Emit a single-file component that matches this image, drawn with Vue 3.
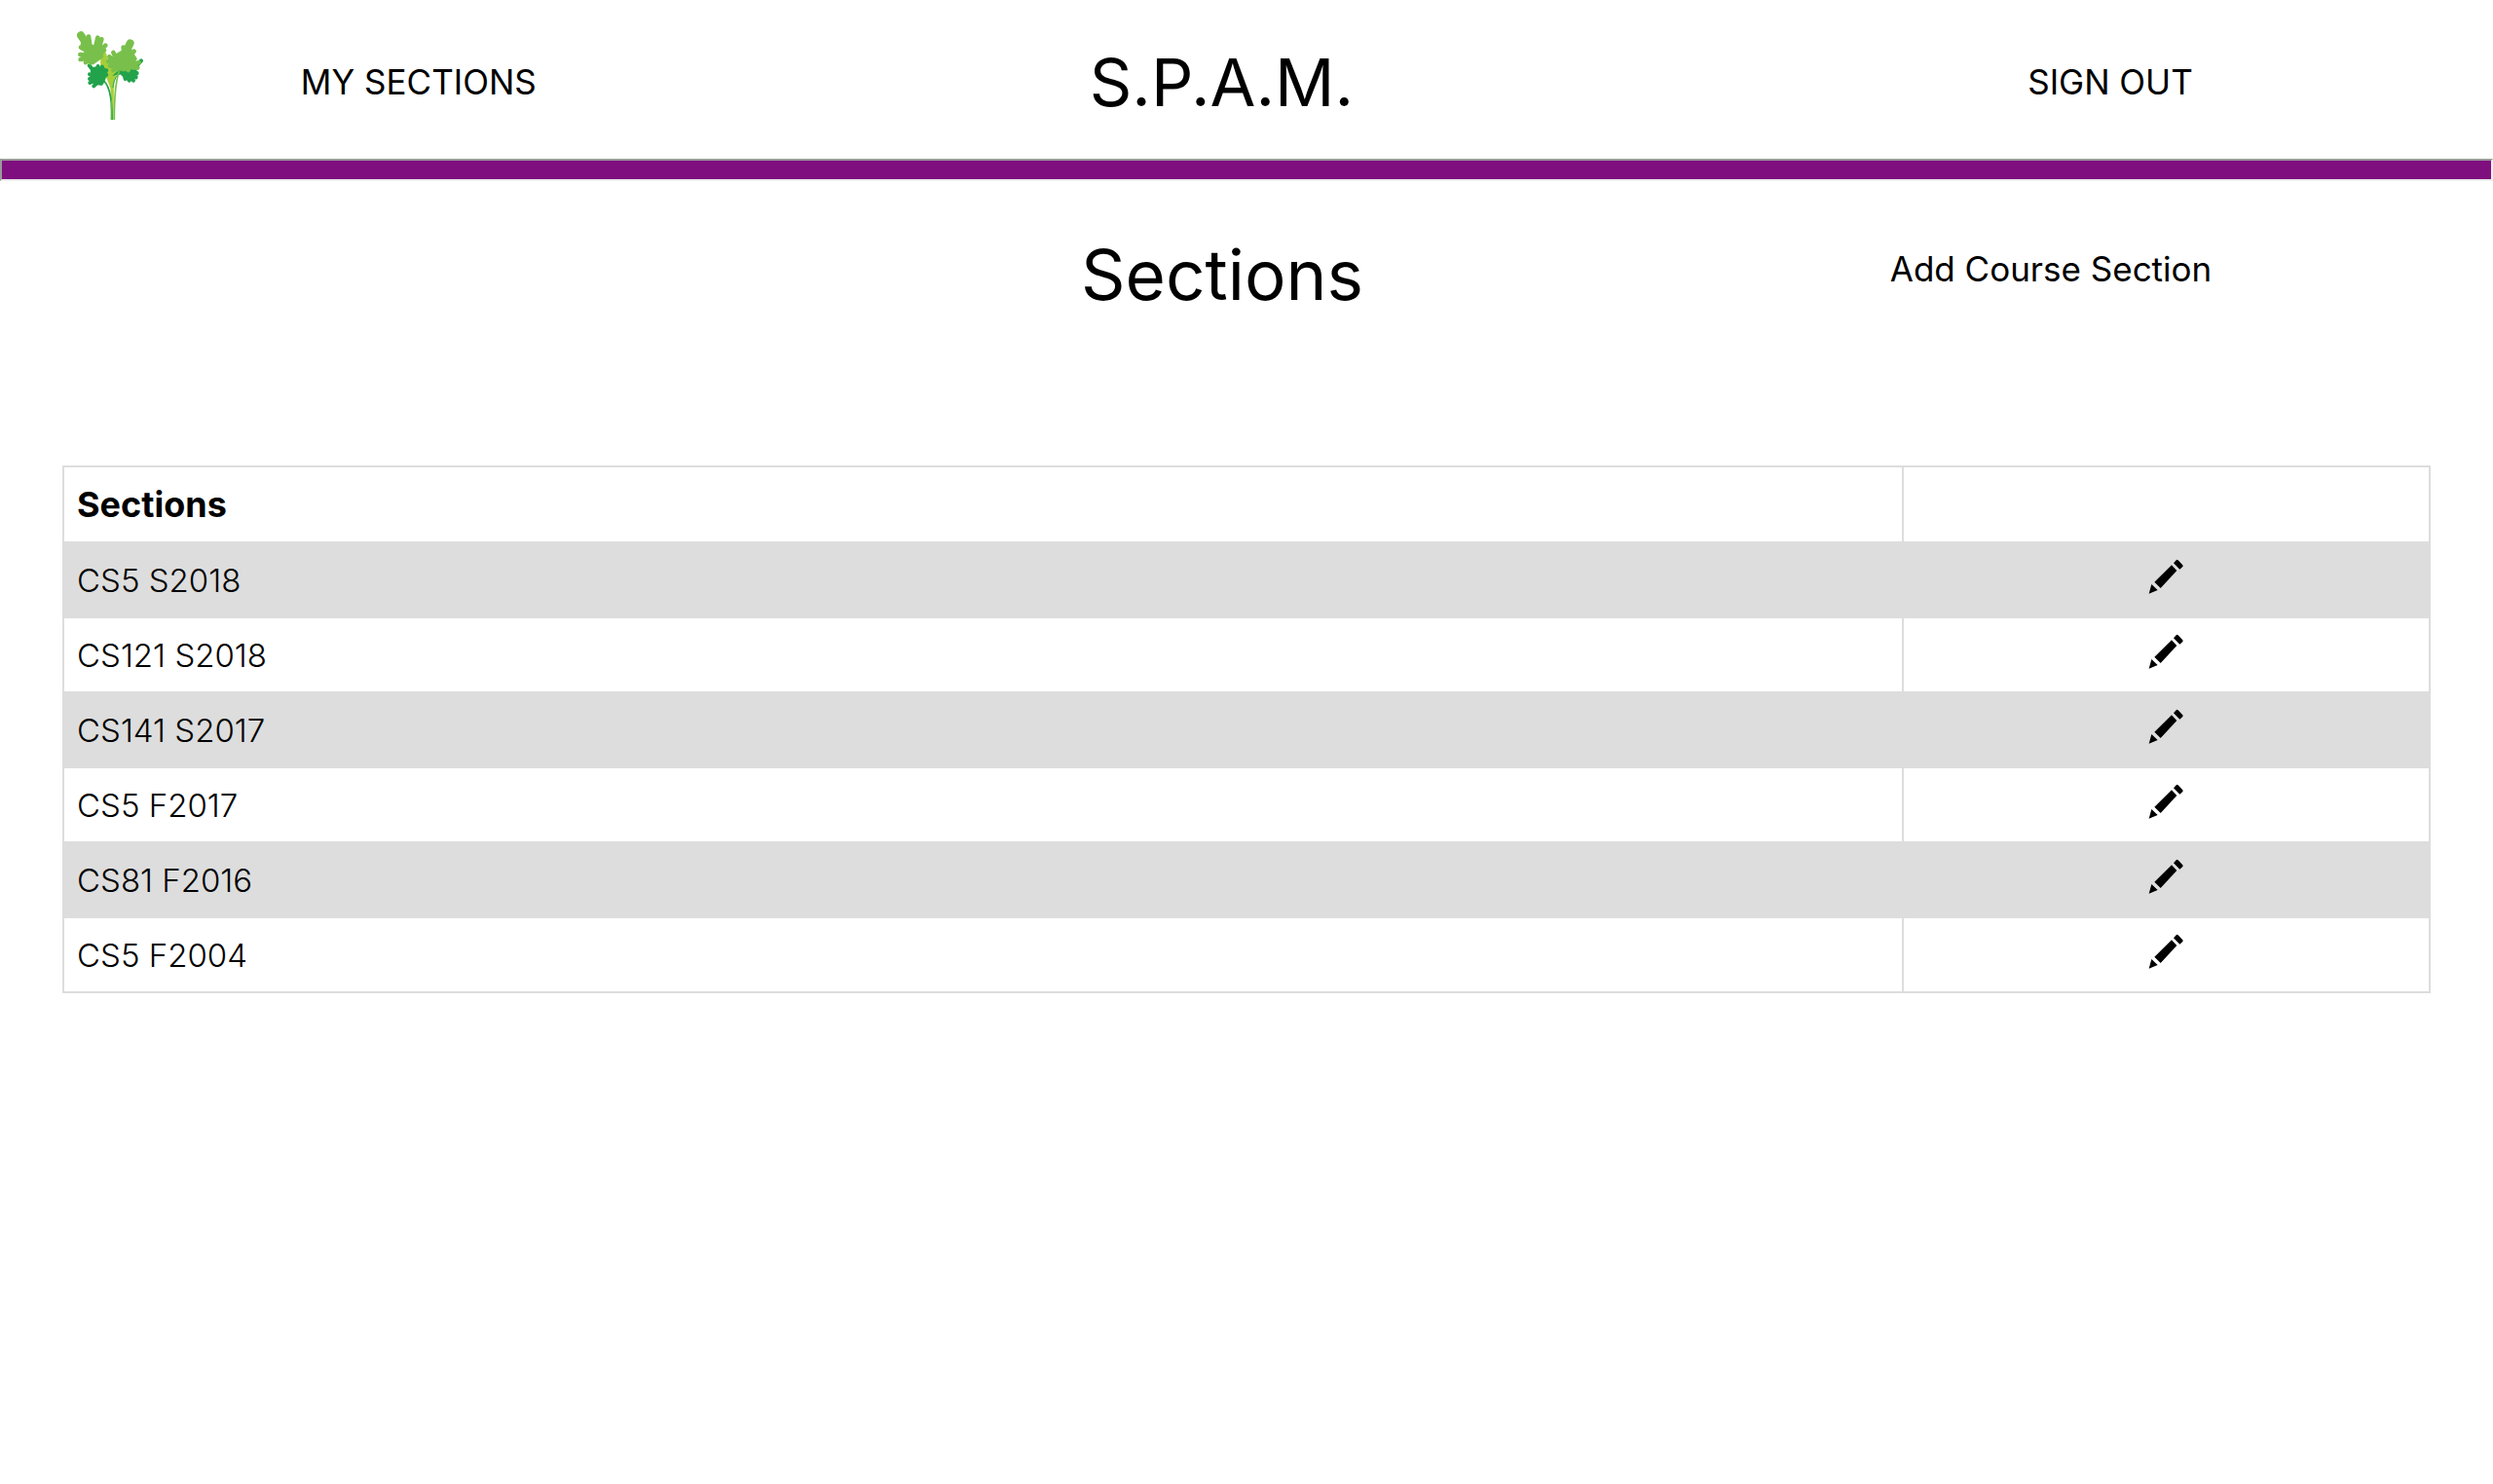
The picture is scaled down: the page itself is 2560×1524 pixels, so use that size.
<script setup>
const sections = [
  'CS5 S2018',
  'CS121 S2018',
  'CS141 S2017',
  'CS5 F2017',
  'CS81 F2016',
  'CS5 F2004',
]
</script>

<template>
  <header>
    <nav class="bar">
      <a class="logo" href="#" aria-label="Home">
        <svg viewBox="58 37 210 276" aria-hidden="true">
          <g class="lime">
            <path d="M143 99C129 104 129 135 134 160L151 184L162 214L165 310H170L172 190L181 171L187 140L158 151C151 137 154 108 143 99Z" />
            <path class="limb" d="M141 145 159 194M160 151 164 210M154 125 162 133" />
          </g>
          <g class="dark">
            <path d="M100 150 120 146 146 151 151 168 143 192 136 204 118 202 101 186Z" />
            <path class="lobe" d="M96 143 113 164M123 145 124 168M136 147 129 170M149 158 132 177M149 172 128 180M97 170 118 178M97 184 119 181M98 196 122 186M110 206 126 190" />
            <path class="stem" d="M128 182C157 194 166 235 166 310" />
            <path d="M168 174 190 154 240 154 247 170 230 187 210 185 190 169Z" />
            <path class="lobe" d="M256 128 236 150M243 166 216 165M240 179 216 168M232 189 213 168M219 189 209 170M207 184 203 168" />
            <path class="stem thin" d="M190 169C177 174 172 190 169 211" />
          </g>
          <g class="leaf">
            <path d="M78 73 91 77 111 80 136 80 139 118 108 140 80 126 80 94Z" />
            <path class="lobe wide" d="M70 50 90 80" />
            <path class="lobe" d="M94 54 99 87M76 76 105 98M122 57 113 97M134 62 122 103M146 81 119 108M142 96 116 115M70 87 104 105M68 109 100 112M69 124 104 116M85 133 110 119M101 134 116 116" />
            <path d="M180 106 205 91 225 90 240 118 235 145 203 161 177 156 159 137 163 118Z" />
            <path class="lobe wide" d="M222 74 205 110" />
            <path class="lobe" d="M201 87 206 119M234 99 204 129M170 103 186 133M158 116 185 136M155 130 187 143M160 144 190 145M236 122 200 141M249 134 205 145M245 150 207 147M216 157 201 145M170 157 195 142" />
            <path class="stem" d="M188 160C176 196 173 246 173 310" />
            <path class="stem thin" d="M163 310 164 250" />
          </g>
        </svg>
      </a>
      <a class="link" href="#">MY SECTIONS</a>
      <span class="brand">S.P.A.M.</span>
      <a class="link" href="#">SIGN OUT</a>
    </nav>
    <hr />
  </header>

  <main>
    <div class="heading">
      <h1>Sections</h1>
      <a class="link" href="#">Add Course Section</a>
    </div>

    <table>
      <thead>
        <tr>
          <th scope="col">Sections</th>
          <td class="action"></td>
        </tr>
      </thead>
      <tbody>
        <tr v-for="section in sections" :key="section">
          <td>{{ section }}</td>
          <td class="action">
            <button type="button" :aria-label="`Edit ${section}`">
              <svg viewBox="45 38 114 114" aria-hidden="true">
                <path d="M120 60 136 77 86 131 67 112ZM58 119 77 137 50 148ZM126 54 134 45Q137 42 140 45L154 60Q156 63 154 65L145 73Z" />
              </svg>
            </button>
          </td>
        </tr>
      </tbody>
    </table>
  </main>
</template>

<style>
body {
  margin: 0;
  background: #fff;
}
</style>

<style scoped>
header,
main {
  font-family: Inter, "Liberation Sans", sans-serif;
  color: #000;
}

.bar {
  display: grid;
  grid-template-columns: 176fr 508fr 1142fr 684fr;
  align-items: center;
  justify-items: center;
  box-sizing: border-box;
  height: 163px;
  padding: 4px 2% 0 0;
}

.logo {
  justify-self: end;
  margin: 0 27px 12px 0;
}

.logo svg {
  display: block;
  width: 70px;
  height: 92px;
}

.link {
  color: inherit;
  font-size: 35px;
  line-height: 44px;
  text-decoration: none;
}

.brand,
h1 {
  margin: 0;
  font-size: 68px;
  font-weight: 400;
  line-height: 84px;
}

hr {
  height: 19px;
  margin: 0;
  border: 2px solid;
  border-color: #9a9a9a #eee #eee #9a9a9a;
  background: #7f0f7e;
}

.heading {
  display: grid;
  grid-template-columns: 684fr 1142fr 560fr 174fr;
  justify-items: center;
  align-items: start;
  padding: 54px 0 154px;
}

h1 {
  grid-column: 2;
  font-size: 71px;
}

.heading .link {
  margin-top: 14px;
}

table {
  width: 95%;
  margin: 0 auto;
  border-collapse: collapse;
  table-layout: fixed;
  font-size: 33px;
  font-weight: 300;
  line-height: 44px;
}

th,
td {
  box-sizing: border-box;
  height: 77px;
  padding: 0 13px;
  border: 2px solid #ddd;
  text-align: left;
}

th {
  height: 78px;
  font-size: 36px;
  font-weight: 700;
}

.action {
  width: 541px;
  text-align: center;
}

tbody tr:nth-child(odd) {
  background: #ddd;
}

button {
  display: block;
  margin: 0 auto 8px;
  padding: 0 2px 0 0;
  border: 0;
  background: none;
  cursor: pointer;
}

button svg {
  display: block;
  width: 38px;
  height: 38px;
}

.lime {
  fill: #a6ce39;
  stroke: #a6ce39;
}

.dark {
  fill: #21a24b;
  stroke: #21a24b;
}

.leaf {
  fill: #78c04b;
  stroke: #78c04b;
}

.lobe,
.limb,
.stem {
  stroke-linecap: round;
  stroke-width: 14;
}

.dark .lobe {
  stroke-width: 12;
}

.limb,
.stem {
  fill: none;
  stroke-width: 5;
}

.stem {
  stroke-linecap: butt;
}

.lobe.wide {
  stroke-width: 24;
}

.thin {
  stroke-width: 3;
}
</style>
